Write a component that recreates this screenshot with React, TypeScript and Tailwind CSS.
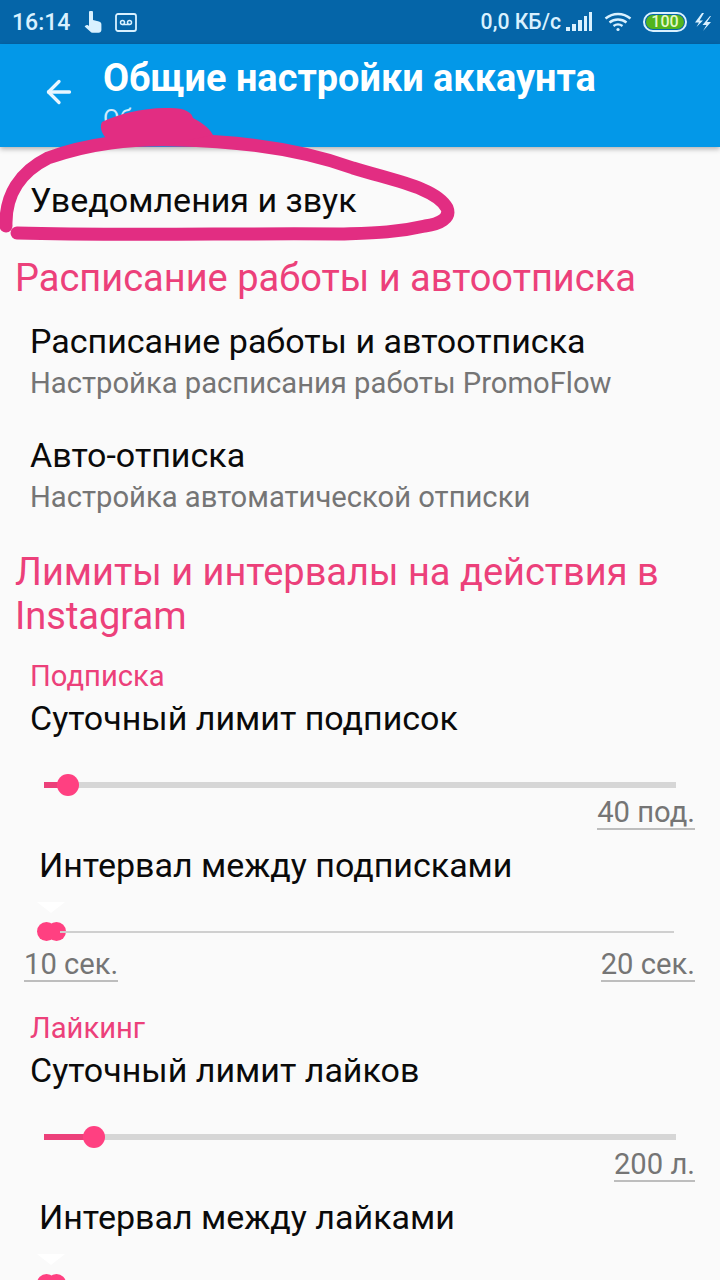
import { ArrowLeft } from "lucide-react";

const pink = "text-[#ec407a]";

function StatusBar() {
  return (
    <div className="flex h-[44px] items-center bg-[#0565a8] pl-[12px] pr-[8px] text-[#d9f1ff]">
      <span className="text-[23px] font-medium leading-none">16:14</span>
      <svg className="ml-[14px]" width="18" height="22" viewBox="0 0 18 22" fill="currentColor">
        <path d="M5 1.500a2 2 0 0 1 4 0V9l6 1.600c1.400.4 2.400 1.400 2.400 2.900V19c0 1.600-1.200 2.800-2.800 2.800H8.600c-1 0-1.800-.4-2.400-1.200L.6 15.500l1-1c.7-.7 1.600-.8 2.400-.3l1 .7V1.500z" />
      </svg>
      <svg className="ml-[13px]" width="22" height="19" viewBox="0 0 22 19" fill="none" stroke="currentColor">
        <rect x="1" y="1" width="20" height="17" rx="2" strokeWidth="1.800" />
        <circle cx="7.500" cy="9.500" r="2" strokeWidth="1.500" />
        <circle cx="14.500" cy="9.500" r="2" strokeWidth="1.500" />
        <path d="M7.500 11.500h7" strokeWidth="1.500" />
      </svg>
      <span className="ml-auto text-[21.200px] font-medium leading-none">0,0 КБ/с</span>
      <svg className="ml-[5px]" width="27" height="20" viewBox="0 0 27 20" fill="currentColor">
        <rect x="0" y="15" width="4" height="4" />
        <rect x="6" y="12" width="4" height="7" />
        <rect x="12" y="8" width="4" height="11" />
        <rect x="18" y="4" width="3" height="15" />
        <rect x="23" y="0" width="3" height="19" />
      </svg>
      <svg className="ml-[11px]" width="28" height="20" viewBox="0 0 28 20" fill="none" stroke="currentColor" strokeWidth="2.400">
        <path d="M1.500 6.500C9 .5 19 .5 26.500 6.500" />
        <path d="M5.500 10.500c5-4 12-4 17 0" />
        <path d="M9.500 14c2.800-2 6.200-2 9 0" />
        <circle cx="14" cy="17.500" r="1.600" fill="currentColor" stroke="none" />
      </svg>
      <div className="ml-[11px] flex h-[20px] w-[44px] items-center rounded-full border-2 border-[#d9f1ff] p-[1px]">
        <div className="flex h-full w-full items-center justify-center rounded-full bg-[#52b41e] text-[16px] font-medium leading-none text-[#e3f7c8]">
          100
        </div>
      </div>
      <svg className="ml-[7px]" width="18" height="20" viewBox="0 0 18 20" fill="currentColor">
        <path d="M8 1 1 10.500h4L2.500 15 9 8.500H5.500L10 1z" />
        <path d="M16 4 8.500 13h4L9 19l8-9h-4l4-6z" />
      </svg>
    </div>
  );
}

function AppBar() {
  return (
    <div className="relative z-10 flex h-[103px] bg-[#0398e8] shadow-[0_2px_5px_rgba(0,0,0,0.3)]">
      <div className="flex w-[103px] items-center pb-[8px] pl-[41px] text-[#e8f6ff]">
        <ArrowLeft size={36} strokeWidth={2.200} />
      </div>
      <div className="flex flex-col">
        <div className="mt-[13px] whitespace-nowrap text-[37.900px] font-bold leading-[42px] text-white">Общие настройки аккаунта</div>
        <div className="mt-[7px] text-[24px] leading-[24px] text-[#cfeafb]">Общие</div>
      </div>
    </div>
  );
}

function Heading({ children }: { children: React.ReactNode }) {
  return <div className={`pl-[15px] pr-[20px] text-[38px] leading-[44px] ${pink}`}>{children}</div>;
}

function Item({ title, sub, className }: { title: string; sub: string; className: string }) {
  return (
    <div className={`pl-[30px] ${className}`}>
      <div className="text-[34px] leading-[42px] text-[#0a0a0a]">{title}</div>
      <div className="text-[29.200px] leading-[42px] text-[#757575]">{sub}</div>
    </div>
  );
}

function Slider({ thumb, value }: { thumb: number; value: string }) {
  return (
    <div>
      <div className="relative mx-[44px] mt-[43px] h-[6px] bg-[#d6d6d6]">
        <div className="absolute left-0 top-0 h-[6px] bg-[#ec407a]" style={{ width: thumb }} />
        <div className="absolute top-[-8px] h-[22px] w-[22px] rounded-full bg-[#ff4081]" style={{ left: thumb - 11 }} />
      </div>
      <div className="mr-[25px] mt-[8px] flex justify-end">
        <Value>{value}</Value>
      </div>
    </div>
  );
}

function Value({ children }: { children: React.ReactNode }) {
  return <div className="whitespace-nowrap border-b-2 border-[#bdbdbd] text-[29.200px] leading-[32px] text-[#757575]">{children}</div>;
}

function RangeThumbs() {
  return (
    <div className="relative h-[40px]">
      <div className="absolute left-[37px] top-0 h-0 w-0 border-x-[14px] border-t-[11px] border-x-transparent border-t-white" />
      <div className="absolute left-[37px] top-[20px] h-[19px] w-[19px] rounded-full bg-[#ff4081]" />
      <div className="absolute left-[47px] top-[20px] h-[19px] w-[19px] rounded-full bg-[#ff4081]" />
    </div>
  );
}

function Range() {
  return (
    <div>
      <div className="relative">
        <RangeThumbs />
        <div className="absolute left-[60px] right-[46px] top-[29px] h-[2px] bg-[#cfcfcf]" />
      </div>
      <div className="mt-[6px] flex justify-between pl-[24px] pr-[25px]">
        <Value>10 сек.</Value>
        <Value>20 сек.</Value>
      </div>
    </div>
  );
}

function Scribble() {
  return (
    <svg className="absolute left-0 top-0 z-20" width="720" height="260" viewBox="0 0 720 260" fill="none">
      <path
        d="M6 226C5 195 20 172 48 158C90 143 130 139 175 140C240 141 300 149 353 168C395 181 436 188 447 208C451 218 440 224 425 226C395 233 370 233 340 234C240 233 120 236 17 233"
        stroke="#e22d82"
        strokeWidth="13"
        strokeLinecap="round"
      />
      <path d="M102 122C118 114 145 107 170 108C186 108 192 113 193 118C200 122 208 126 213 135L160 146L112 144C102 136 99 128 102 122Z" fill="#e22d82" />
    </svg>
  );
}

export default function App() {
  return (
    <div className="relative h-[1280px] w-[720px] overflow-hidden bg-[#fafafa] font-['Roboto',sans-serif]">
      <StatusBar />
      <AppBar />
      <Scribble />
      <div className="pl-[30px] pt-[32px] text-[34px] leading-[42px] text-[#0a0a0a]">Уведомления и звук</div>
      <div className="mt-[35px]">
        <Heading>Расписание работы и автоотписка</Heading>
      </div>
      <Item className="mt-[20px]" title="Расписание работы и автоотписка" sub="Настройка расписания работы PromoFlow" />
      <Item className="mt-[30px]" title="Авто-отписка" sub="Настройка автоматической отписки" />
      <div className="mt-[32px]">
        <Heading>Лимиты и интервалы на действия в Instagram</Heading>
      </div>
      <div className={`mt-[18px] pl-[30px] text-[29.200px] leading-[41px] ${pink}`}>Подписка</div>
      <div className="pl-[30px] text-[34px] leading-[42px] text-[#0a0a0a]">Суточный лимит подписок</div>
      <Slider thumb={24} value="40 под." />
      <div className="mt-[14px] pl-[39px] text-[34px] leading-[42px] text-[#0a0a0a]">Интервал между подписками</div>
      <div className="mt-[16px]">
        <Range />
      </div>
      <div className={`mt-[26px] pl-[30px] text-[29.200px] leading-[41px] ${pink}`}>Лайкинг</div>
      <div className="pl-[30px] text-[34px] leading-[42px] text-[#0a0a0a]">Суточный лимит лайков</div>
      <Slider thumb={50} value="200 л." />
      <div className="mt-[14px] pl-[39px] text-[34px] leading-[42px] text-[#0a0a0a]">Интервал между лайками</div>
      <div className="mt-[16px]">
        <RangeThumbs />
      </div>
    </div>
  );
}
